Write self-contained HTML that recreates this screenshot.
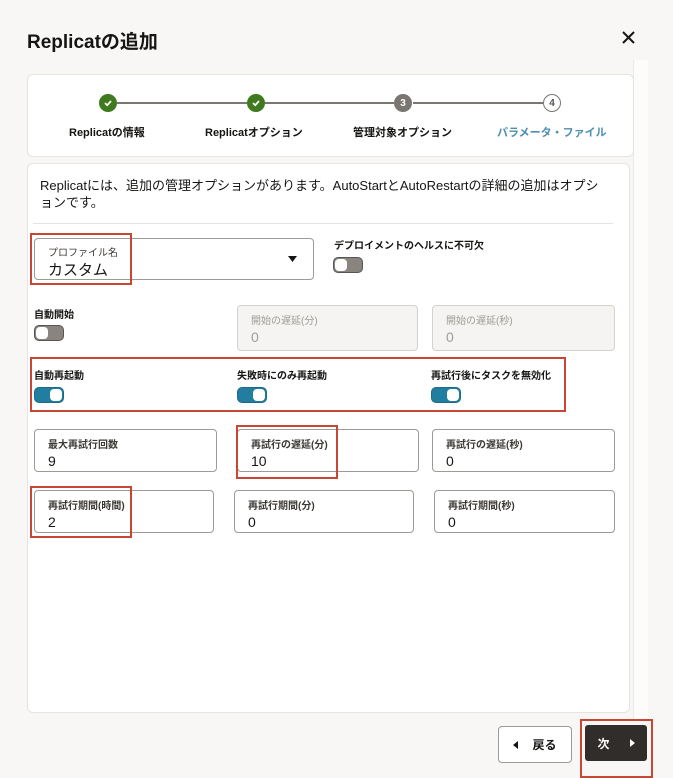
<!DOCTYPE html>
<html><head><meta charset="utf-8"><style>
*{box-sizing:border-box;margin:0;padding:0}
body{width:673px;height:778px;background:#f8f7f5;font-family:"Liberation Sans","Noto Sans CJK JP",sans-serif;color:#161513;position:relative;overflow:hidden}
.a{position:absolute}
.card{background:#fff;border:1px solid #e6e4e1;border-radius:6px}
.c{width:18px;height:18px;border-radius:50%;font-size:10px;font-weight:bold;color:#fff;display:flex;align-items:center;justify-content:center}
.lab{font-size:11px;font-weight:bold;color:#161513;white-space:nowrap}
.f{border:1px solid #9e9a95;border-radius:4px;background:#fff;padding:6px 0 0 13px}
.f .l{font-size:10px;color:#3d3a36;font-weight:bold}
.f .v{font-size:14px;margin-top:2px}
.dis{background:#f5f4f2;border-color:#d5d2ce}
.dis .l,.dis .v{color:#a09c97;font-weight:normal}
.red{border:2px solid #c74634}
.tg{width:30px;height:16px;border-radius:5px;border:1px solid #555}
.off{background:#8a847e}
.on{background:#227e9e;border-color:#1b6a86}
.tg i{position:absolute;top:1px;width:12px;height:12px;border-radius:4px;background:#fff;display:block}
.off i{left:1px}.on i{left:15px}
.line{height:2px;background:#7a7672}
</style></head><body>
<div class="a" style="left:27px;top:27px;font-size:19px;font-weight:bold">Replicatの追加</div>
<svg class="a" style="left:622px;top:31px" width="13" height="13" viewBox="0 0 13 13"><path d="M1 1L12 12M12 1L1 12" stroke="#161513" stroke-width="2"/></svg>
<div class="a" style="left:633px;top:60px;width:15px;height:660px;background:#fcfcfb;border-left:1px solid #eceae7"></div>
<div class="a card" style="left:27px;top:74px;width:607px;height:83px"></div>
<div class="a line" style="left:117px;top:102px;width:130px"></div>
<div class="a line" style="left:265px;top:102px;width:129px"></div>
<div class="a line" style="left:413px;top:102px;width:130px"></div>
<div class="a c" style="left:99px;top:94px;background:#3f7a1e"><svg width="10" height="10" viewBox="0 0 10 10"><path d="M2 5L4.2 7.2L8 3" stroke="#fff" stroke-width="1.8" fill="none"/></svg></div>
<div class="a c" style="left:247px;top:94px;background:#3f7a1e"><svg width="10" height="10" viewBox="0 0 10 10"><path d="M2 5L4.2 7.2L8 3" stroke="#fff" stroke-width="1.8" fill="none"/></svg></div>
<div class="a c" style="left:394px;top:94px;background:#7a7672">3</div>
<div class="a c" style="left:543px;top:94px;background:#fff;border:1.5px solid #7a7672;color:#555">4</div>
<div class="a lab" style="left:69px;top:124px">Replicatの情報</div>
<div class="a lab" style="left:205px;top:124px">Replicatオプション</div>
<div class="a lab" style="left:353px;top:124px">管理対象オプション</div>
<div class="a lab" style="left:497px;top:124px;color:#4f8fb0;font-size:11px">パラメータ・ファイル</div>
<div class="a card" style="left:27px;top:163px;width:603px;height:550px"></div>
<div class="a" style="left:40px;top:177px;width:564px;font-size:13px;line-height:17px">Replicatには、追加の管理オプションがあります。AutoStartとAutoRestartの詳細の追加はオプションです。</div>
<div class="a" style="left:33px;top:223px;width:580px;height:1px;background:#e6e4e1"></div>

<div class="a f" style="left:34px;top:238px;width:280px;height:42px;padding-top:5px"><div class="l" style="font-weight:normal">プロファイル名</div><div class="v" style="margin-top:0;font-size:15px">カスタム</div></div>
<svg class="a" style="left:288px;top:256px" width="9" height="6"><path d="M0 0H9L4.5 6Z" fill="#161513"/></svg>
<div class="a lab" style="left:334px;top:237px;font-size:10px">デプロイメントのヘルスに不可欠</div>
<div class="a tg off" style="left:333px;top:257px"><i></i></div>
<div class="a lab" style="left:34px;top:306px;font-size:10px">自動開始</div>
<div class="a tg off" style="left:34px;top:325px"><i></i></div>
<div class="a f dis" style="left:237px;top:305px;width:181px;height:46px"><div class="l">開始の遅延(分)</div><div class="v">0</div></div>
<div class="a f dis" style="left:432px;top:305px;width:183px;height:46px"><div class="l">開始の遅延(秒)</div><div class="v">0</div></div>

<div class="a lab" style="left:34px;top:367px;font-size:10px">自動再起動</div>
<div class="a lab" style="left:237px;top:367px;font-size:10px">失敗時にのみ再起動</div>
<div class="a lab" style="left:431px;top:367px;font-size:10px">再試行後にタスクを無効化</div>
<div class="a tg on" style="left:34px;top:387px"><i></i></div>
<div class="a tg on" style="left:237px;top:387px"><i></i></div>
<div class="a tg on" style="left:431px;top:387px"><i></i></div>

<div class="a f" style="left:34px;top:429px;width:183px;height:43px"><div class="l">最大再試行回数</div><div class="v">9</div></div>
<div class="a f" style="left:237px;top:429px;width:182px;height:43px"><div class="l">再試行の遅延(分)</div><div class="v">10</div></div>
<div class="a f" style="left:432px;top:429px;width:183px;height:43px"><div class="l">再試行の遅延(秒)</div><div class="v">0</div></div>
<div class="a f" style="left:34px;top:490px;width:180px;height:43px"><div class="l">再試行期間(時間)</div><div class="v">2</div></div>
<div class="a f" style="left:234px;top:490px;width:180px;height:43px"><div class="l">再試行期間(分)</div><div class="v">0</div></div>
<div class="a f" style="left:434px;top:490px;width:181px;height:43px"><div class="l">再試行期間(秒)</div><div class="v">0</div></div>

<div class="a red" style="left:30px;top:233px;width:102px;height:52px"></div>
<div class="a red" style="left:30px;top:357px;width:536px;height:55px"></div>
<div class="a red" style="left:236px;top:425px;width:102px;height:54px"></div>
<div class="a red" style="left:30px;top:486px;width:102px;height:52px"></div>

<div class="a" style="left:498px;top:726px;width:74px;height:37px;border:1px solid #9e9a95;border-radius:4px;background:#fff;font-size:12px;font-weight:bold;display:flex;align-items:center;justify-content:center"><svg width="5" height="8" style="margin-right:14px"><path d="M5 0V8L0 4Z" fill="#161513"/></svg>戻る</div>
<div class="a" style="left:585px;top:725px;width:62px;height:36px;background:#312d2a;border-radius:3px;color:#fff;font-size:12px;font-weight:bold;display:flex;align-items:center;justify-content:center">次<svg width="5" height="8" style="margin-left:20px"><path d="M0 0V8L5 4Z" fill="#fff"/></svg></div>
<div class="a red" style="left:580px;top:719px;width:73px;height:59px"></div>
</body></html>
